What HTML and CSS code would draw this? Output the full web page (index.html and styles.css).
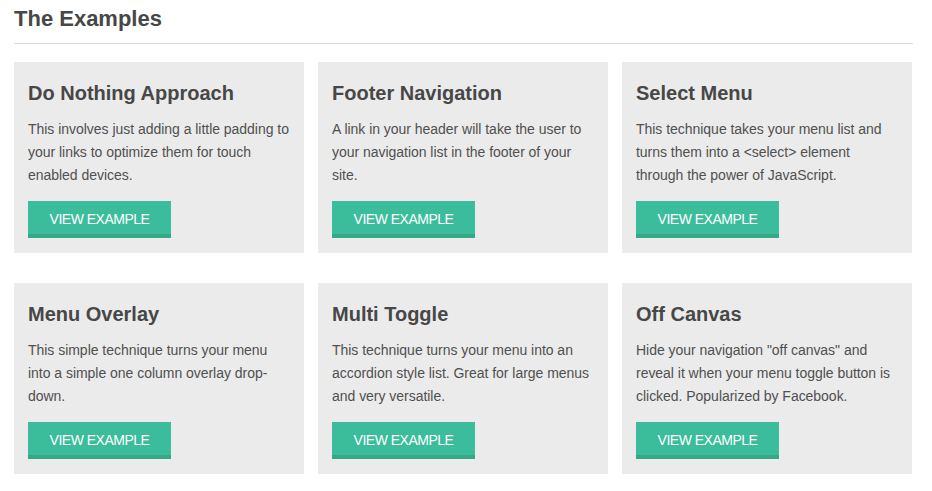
FILE: index.html
```html
<!DOCTYPE html>
<html>
<head>
<meta charset="utf-8">
<link rel="stylesheet" href="styles.css">
</head>
<body>
<div class="page">
  <h1 class="page-title">The Examples</h1>
  <div class="grid">
    <div class="card">
      <h2 class="card-title">Do Nothing Approach</h2>
      <p class="card-text">This involves just adding a little padding to your links to optimize them for touch enabled devices.</p>
      <a class="btn" href="#">VIEW EXAMPLE</a>
    </div>
    <div class="card">
      <h2 class="card-title">Footer Navigation</h2>
      <p class="card-text">A link in your header will take the user to your navigation list in the footer of your site.</p>
      <a class="btn" href="#">VIEW EXAMPLE</a>
    </div>
    <div class="card">
      <h2 class="card-title">Select Menu</h2>
      <p class="card-text">This technique takes your menu list and turns them into a &lt;select&gt; element through the power of JavaScript.</p>
      <a class="btn" href="#">VIEW EXAMPLE</a>
    </div>
    <div class="card">
      <h2 class="card-title">Menu Overlay</h2>
      <p class="card-text">This simple technique turns your menu into a simple one column overlay drop-down.</p>
      <a class="btn" href="#">VIEW EXAMPLE</a>
    </div>
    <div class="card">
      <h2 class="card-title">Multi Toggle</h2>
      <p class="card-text">This technique turns your menu into an accordion style list. Great for large menus and very versatile.</p>
      <a class="btn" href="#">VIEW EXAMPLE</a>
    </div>
    <div class="card">
      <h2 class="card-title">Off Canvas</h2>
      <p class="card-text">Hide your navigation "off canvas" and reveal it when your menu toggle button is clicked. Popularized by Facebook.</p>
      <a class="btn" href="#">VIEW EXAMPLE</a>
    </div>
  </div>
</div>
</body>
</html>
```
FILE: styles.css
```css
* { box-sizing: border-box; }
html, body { margin: 0; padding: 0; background: #fff; }
body {
  font-family: "Liberation Sans", Arial, sans-serif;
  color: #444;
}
.page {
  padding: 6px 19px 0 14px;
}
.page-title {
  margin: 0;
  font-size: 22px;
  line-height: 26px;
  font-weight: bold;
  color: #474747;
  padding-bottom: 11px;
  border-bottom: 1px solid #dcdcdc;
}
.grid {
  display: grid;
  grid-template-columns: repeat(3, 290px);
  column-gap: 14px;
  row-gap: 30px;
  margin-top: 18px;
}
.card {
  background: #ebebeb;
  padding: 19px 13px 15px 14px;
  height: 191px;
}
.card-title {
  margin: 0;
  font-size: 20px;
  line-height: 24px;
  font-weight: bold;
  color: #474747;
}
.card-text {
  margin: 13px 0 0;
  font-size: 14px;
  line-height: 23px;
  color: #505050;
  letter-spacing: -0.03px;
  height: 69px;
}
.btn {
  display: inline-block;
  margin-top: 14px;
  width: 143px;
  height: 37px;
  background: #3bbc9b;
  border-bottom: 4px solid #35a886;
  color: #fff;
  text-decoration: none;
  font-size: 14px;
  line-height: 36px;
  text-align: center;
  letter-spacing: -0.5px;
}
```
